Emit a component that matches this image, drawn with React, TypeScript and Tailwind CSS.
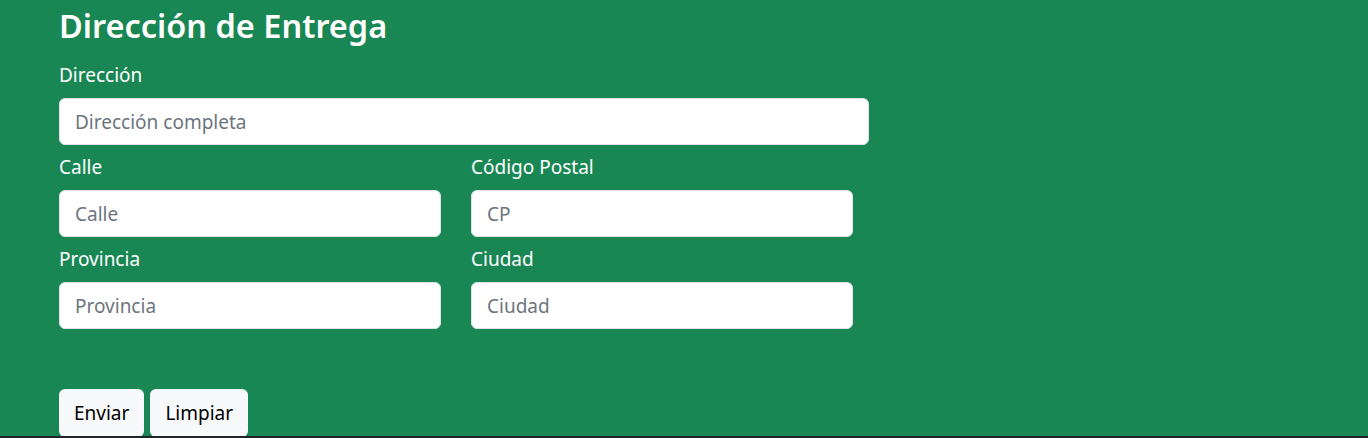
const inputCls =
  'mt-[8px] block h-[47px] w-full rounded-[6px] border border-[#dee2e6] bg-white px-[15px] text-[19px] text-[#212529] placeholder:text-[#6c757d] outline-none';

function Field({ label, placeholder }: { label: string; placeholder: string }) {
  return (
    <div>
      <label className="mt-[7px] block text-[19px] leading-[30px]">{label}</label>
      <input className={inputCls} placeholder={placeholder} />
    </div>
  );
}

export default function App() {
  const font = { fontFamily: '"Noto Sans", "Open Sans", sans-serif' };
  return (
    <div className="min-h-[438px] bg-[#212529]" style={font}>
      <div className="h-[436px] overflow-hidden bg-[#198754] pl-[59px] text-white">
        <h2 className="pt-[5px] text-[32.5px] font-semibold leading-[42px]">Dirección de Entrega</h2>
        <form className="mt-[13px] w-[810px]">
          <label className="block text-[19px] leading-[30px]">Dirección</label>
          <input className={inputCls} placeholder="Dirección completa" />
          <div className="grid grid-cols-[382px_382px] gap-x-[30px]">
            <Field label="Calle" placeholder="Calle" />
            <Field label="Código Postal" placeholder="CP" />
            <Field label="Provincia" placeholder="Provincia" />
            <Field label="Ciudad" placeholder="Ciudad" />
          </div>
          <div className="mt-[60px] flex gap-[6px]">
            <button type="button" className="h-[48px] rounded-[6px] bg-[#f8f9fa] px-[15px] text-[19px] text-black">
              Enviar
            </button>
            <button type="button" className="h-[48px] rounded-[6px] bg-[#f8f9fa] px-[15px] text-[19px] text-black">
              Limpiar
            </button>
          </div>
        </form>
      </div>
      <div className="h-[2px] bg-[#212529]" />
    </div>
  );
}
